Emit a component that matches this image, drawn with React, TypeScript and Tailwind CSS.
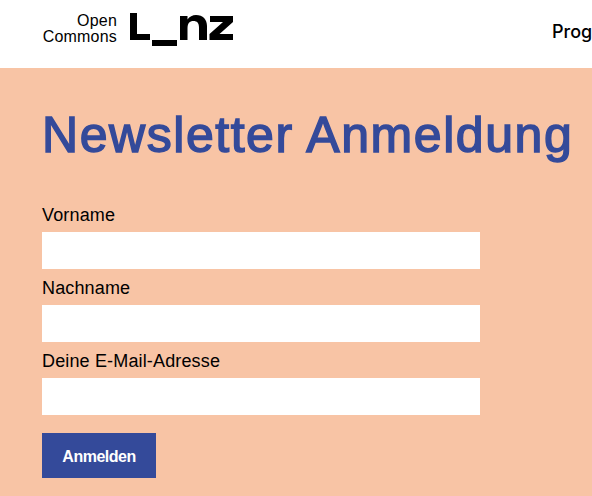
export default function App() {
  const field = "block w-[438px] h-[37px] mt-[4px] bg-white border-0 outline-none";
  const label = "block text-[18px] tracking-[0.15px] leading-[26px] text-black";
  return (
    <div className="w-[592px] h-[496px] overflow-hidden bg-[#f8c4a5] font-['Liberation_Sans',sans-serif]">
      <header className="h-[68px] bg-white flex items-start pl-[42px] whitespace-nowrap">
        <div className="w-[75px] mt-[13px] text-right text-[16px] tracking-[0.2px] leading-[16px] text-black">
          <div>Open</div>
          <div>Commons</div>
        </div>
        <svg className="ml-[13px] mt-[13px] shrink-0" width="104" height="34" viewBox="0 0 104 34" fill="#000">
          <path d="M0 0h7v21h13v6H0z" />
          <path d="M22 27h25v6H22z" />
          <path d="M50 3h7.500v3.500C59.500 3.500 62.500 2 66 2c7 0 11 4.500 11 11v14h-8V14.500c0-4.500-2-6.500-5.500-6.500-4 0-6 2.500-6 7V27H50z" />
          <path d="M80 3h23v6L89.500 21H103v6H79.500v-6L93 9H80z" />
        </svg>
        <div className="absolute left-[552px] top-[20px] w-[40px] overflow-hidden text-[18px] leading-[24px] font-['Inter',sans-serif] font-medium text-black">Programm</div>
      </header>
      <main className="pl-[42px] pt-[37px]">
        <h1 className="text-[50px] leading-[60px] font-normal tracking-[1.55px] [-webkit-text-stroke:1.5px_#344a9a] text-[#344a9a] whitespace-nowrap">Newsletter Anmeldung</h1>
        <form className="mt-[37px]">
          <label className={label}>Vorname</label>
          <input className={field} />
          <label className={`${label} mt-[6px]`}>Nachname</label>
          <input className={field} />
          <label className={`${label} mt-[6px]`}>Deine E-Mail-Adresse</label>
          <input className={field} />
          <button type="button" className="block mt-[18px] pt-[2px] w-[114px] h-[45px] bg-[#344a9a] text-white text-[16px] tracking-[-0.5px] font-bold">Anmelden</button>
        </form>
      </main>
    </div>
  );
}
